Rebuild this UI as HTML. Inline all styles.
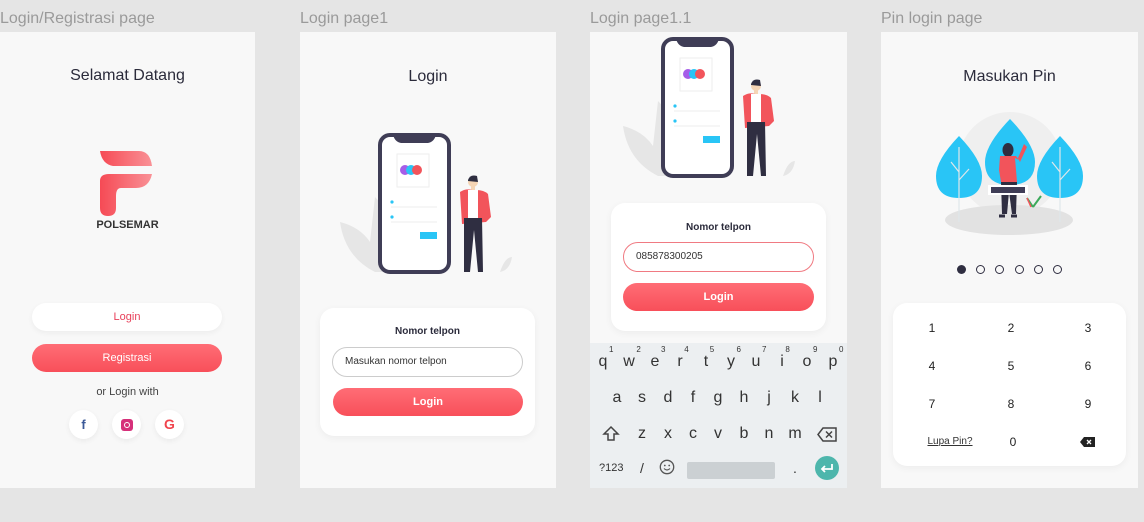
<!DOCTYPE html>
<html><head><meta charset="utf-8"><style>
*{margin:0;padding:0;box-sizing:border-box}
body{width:1144px;height:522px;background:#e5e5e5;position:relative;overflow:hidden;font-family:"Liberation Sans",sans-serif}
.lbl{position:absolute;top:10px;font-size:16px;color:#9a9a9a}
.fr{position:absolute;top:32px;height:456px;background:#f8f8f8;overflow:hidden}
.a{position:absolute}
.t{position:absolute;width:100%;text-align:center;color:#2b2b3b}
.btn{position:absolute;border-radius:15px;text-align:center;font-size:11px;font-weight:bold;color:#fff;background:linear-gradient(#ff6d76,#f84f5a)}
.card{position:absolute;background:#fff;border-radius:14px;box-shadow:0 2px 8px rgba(0,0,0,.05)}
.k{position:absolute;font-size:16px;color:#333;transform:translateX(-50%)}
.k sup{position:absolute;font-size:8px;top:-8px;right:-6px}
.n{position:absolute;font-size:12px;color:#222;transform:translateX(-50%)}
.soc{position:absolute;width:29px;height:29px;border-radius:50%;background:#fff;box-shadow:0 2px 6px rgba(0,0,0,.06);text-align:center;line-height:29px;font-weight:bold;font-size:14px}
</style></head><body>
<div class="lbl" style="left:0">Login/Registrasi page</div>
<div class="lbl" style="left:300px">Login page1</div>
<div class="lbl" style="left:590px">Login page1.1</div>
<div class="lbl" style="left:881px">Pin login page</div>

<!-- frame 1 -->
<div class="fr" style="left:0;width:255px">
 <div class="t" style="top:35px;font-size:16px">Selamat Datang</div>
 <svg class="a" style="left:99px;top:119px" width="54" height="65" viewBox="0 0 54 65">
  <defs><linearGradient id="g1" x1="0" x2="1"><stop offset="0" stop-color="#f64a55"/><stop offset="1" stop-color="#f99196"/></linearGradient></defs>
  <path d="M1 0H40Q51 0 53 15H14Q3 13 1 0Z" fill="url(#g1)"/>
  <path d="M1 30Q1 23 10 23H53Q50 37 37 37H22Q17 37 17 45V57Q17 65 9 65Q1 65 1 57Z" fill="url(#g1)"/>
 </svg>
 <div class="t" style="top:187px;font-size:11px;font-weight:bold;color:#333">POLSEMAR</div>
 <div class="btn" style="left:32px;top:271px;width:190px;height:28px;line-height:28px;background:#fff;color:#e8405a;font-weight:normal;box-shadow:0 2px 6px rgba(0,0,0,.05)">Login</div>
 <div class="btn" style="left:32px;top:312px;width:190px;height:28px;line-height:28px;font-weight:normal">Registrasi</div>
 <div class="t" style="top:354px;font-size:11px;color:#444">or Login with</div>
 <div class="soc" style="left:69px;top:378px;color:#3b5998;font-size:13px">f</div>
 <div class="soc" style="left:112px;top:378px"><span style="display:inline-block;width:12px;height:12px;border-radius:3px;background:#d6307a;vertical-align:middle;position:relative"><span style="position:absolute;left:3px;top:3px;width:6px;height:6px;border-radius:50%;border:1.5px solid #fff;box-sizing:border-box"></span></span></div>
 <div class="soc" style="left:155px;top:378px;color:#f0444d">G</div>
</div>

<!-- frame 2 -->
<div class="fr" style="left:300px;width:256px">
 <div class="t" style="top:36px;font-size:16px">Login</div>
 <svg class="a" style="left:0;top:0" width="256" height="260">
   <path d="M40 190Q60 195 70 210L75 165Q95 185 95 220L110 240L75 240Q45 225 40 190Z" fill="#e6e6e6"/>
   <path d="M200 240Q205 225 212 225Q210 238 200 240Z" fill="#e6e6e6"/>
   <rect x="80" y="103" width="69" height="137" rx="10" fill="#fff" stroke="#3f3d56" stroke-width="4"/>
   <path d="M93 103H136Q134 110 128 111H101Q95 110 93 103Z" fill="#3f3d56"/>
   <rect x="97" y="122" width="32" height="33" fill="#fff" stroke="#eee"/>
   <circle cx="105" cy="138" r="5" fill="#a55de8"/><circle cx="111" cy="138" r="5" fill="#29c5f6"/><circle cx="117" cy="138" r="5" fill="#f2545b"/>
   <circle cx="92" cy="170" r="1.6" fill="#29c5f6"/><circle cx="92" cy="185" r="1.6" fill="#29c5f6"/>
   <line x1="91" y1="175" x2="137" y2="175" stroke="#eee"/><line x1="91" y1="190" x2="137" y2="190" stroke="#eee"/>
   <rect x="120" y="200" width="17" height="7" fill="#29c5f6"/>
   <circle cx="173" cy="150" r="5" fill="#f5d5b5"/><path d="M168 148Q170 142 177 144L178 150L168 149Z" fill="#2f2e41"/>
   <rect x="171" y="154" width="4" height="5" fill="#f5d5b5"/>
   <path d="M160 160Q166 156 172 158H176Q184 158 188 162L191 185L186 190L162 192Z" fill="#f2545b"/>
   <rect x="168" y="158" width="10" height="28" fill="#fff"/>
   <path d="M164 186H182L183 240H178L174 198L170 240H164Z" fill="#2f2e41"/>
 </svg>
 <div class="card" style="left:20px;top:276px;width:215px;height:128px">
  <div class="t" style="top:18px;font-size:10px;font-weight:bold">Nomor telpon</div>
  <div class="a" style="left:12px;top:39px;width:191px;height:30px;border:1px solid #ccc;border-radius:15px;font-size:10px;line-height:28px;padding-left:12px;color:#333">Masukan nomor telpon</div>
  <div class="btn" style="left:13px;top:80px;width:190px;height:28px;line-height:28px">Login</div>
 </div>
</div>

<!-- frame 3 -->
<div class="fr" style="left:590px;width:257px">
 <svg class="a" style="left:0;top:0" width="257" height="170">
  <g transform="translate(-7,-96)">
   <path d="M40 190Q60 195 70 210L75 165Q95 185 95 220L110 240L75 240Q45 225 40 190Z" fill="#e6e6e6"/>
   <path d="M200 240Q205 225 212 225Q210 238 200 240Z" fill="#e6e6e6"/>
   <rect x="80" y="103" width="69" height="137" rx="10" fill="#fff" stroke="#3f3d56" stroke-width="4"/>
   <path d="M93 103H136Q134 110 128 111H101Q95 110 93 103Z" fill="#3f3d56"/>
   <rect x="97" y="122" width="32" height="33" fill="#fff" stroke="#eee"/>
   <circle cx="105" cy="138" r="5" fill="#a55de8"/><circle cx="111" cy="138" r="5" fill="#29c5f6"/><circle cx="117" cy="138" r="5" fill="#f2545b"/>
   <circle cx="92" cy="170" r="1.6" fill="#29c5f6"/><circle cx="92" cy="185" r="1.6" fill="#29c5f6"/>
   <line x1="91" y1="175" x2="137" y2="175" stroke="#eee"/><line x1="91" y1="190" x2="137" y2="190" stroke="#eee"/>
   <rect x="120" y="200" width="17" height="7" fill="#29c5f6"/>
   <circle cx="173" cy="150" r="5" fill="#f5d5b5"/><path d="M168 148Q170 142 177 144L178 150L168 149Z" fill="#2f2e41"/>
   <rect x="171" y="154" width="4" height="5" fill="#f5d5b5"/>
   <path d="M160 160Q166 156 172 158H176Q184 158 188 162L191 185L186 190L162 192Z" fill="#f2545b"/>
   <rect x="168" y="158" width="10" height="28" fill="#fff"/>
   <path d="M164 186H182L183 240H178L174 198L170 240H164Z" fill="#2f2e41"/>
  </g>
 </svg>
 <div class="card" style="left:21px;top:171px;width:215px;height:128px">
  <div class="t" style="top:19px;font-size:10px;font-weight:bold">Nomor telpon</div>
  <div class="a" style="left:12px;top:39px;width:191px;height:30px;border:1px solid #f07a82;border-radius:15px;font-size:10px;line-height:28px;padding-left:12px;color:#333">085878300205</div>
  <div class="btn" style="left:12px;top:80px;width:191px;height:28px;line-height:28px">Login</div>
 </div>
 <div class="a" style="left:0;top:311px;width:257px;height:145px;background:#eceff1">
  <div class="k" style="left:13px;top:10px">q<sup>1</sup></div><div class="k" style="left:39px;top:10px">w<sup>2</sup></div><div class="k" style="left:65px;top:10px">e<sup>3</sup></div><div class="k" style="left:90px;top:10px">r<sup>4</sup></div><div class="k" style="left:116px;top:10px">t<sup>5</sup></div><div class="k" style="left:141px;top:10px">y<sup>6</sup></div><div class="k" style="left:166px;top:10px">u<sup>7</sup></div><div class="k" style="left:192px;top:10px">i<sup>8</sup></div><div class="k" style="left:217px;top:10px">o<sup>9</sup></div><div class="k" style="left:243px;top:10px">p<sup>0</sup></div>
  <div class="k" style="left:27px;top:46px">a</div><div class="k" style="left:52px;top:46px">s</div><div class="k" style="left:78px;top:46px">d</div><div class="k" style="left:103px;top:46px">f</div><div class="k" style="left:128px;top:46px">g</div><div class="k" style="left:154px;top:46px">h</div><div class="k" style="left:179px;top:46px">j</div><div class="k" style="left:205px;top:46px">k</div><div class="k" style="left:230px;top:46px">l</div>
  <svg class="a" style="left:12px;top:82px" width="18" height="18" viewBox="0 0 18 18"><path d="M9 2L16 9H12V15H6V9H2Z" fill="none" stroke="#444" stroke-width="1.5"/></svg>
  <div class="k" style="left:52px;top:82px">z</div><div class="k" style="left:78px;top:82px">x</div><div class="k" style="left:103px;top:82px">c</div><div class="k" style="left:128px;top:82px">v</div><div class="k" style="left:154px;top:82px">b</div><div class="k" style="left:179px;top:82px">n</div><div class="k" style="left:205px;top:82px">m</div>
  <svg class="a" style="left:227px;top:84px" width="20" height="15" viewBox="0 0 20 15"><path d="M6 1H19V14H6L1 7.5Z" fill="none" stroke="#444" stroke-width="1.5"/><path d="M9 4.5L15 10.5M15 4.5L9 10.5" stroke="#444" stroke-width="1.5"/></svg>
  <div class="a" style="left:9px;top:119px;font-size:11px;color:#333">?123</div>
  <div class="a" style="left:50px;top:117px;font-size:14px;color:#333">/</div>
  <svg class="a" style="left:69px;top:116px" width="16" height="16" viewBox="0 0 16 16"><circle cx="8" cy="8" r="6.7" fill="none" stroke="#555" stroke-width="1.3"/><circle cx="5.8" cy="6.5" r="0.9" fill="#555"/><circle cx="10.2" cy="6.5" r="0.9" fill="#555"/><path d="M5 9.5Q8 12.5 11 9.5" fill="none" stroke="#555" stroke-width="1.2"/></svg>
  <div class="a" style="left:97px;top:119px;width:88px;height:17px;background:#cbd0d3;border-radius:2px"></div>
  <div class="a" style="left:203px;top:117px;font-size:14px;color:#333">.</div>
  <div class="a" style="left:225px;top:113px;width:24px;height:24px;border-radius:50%;background:#4db6ac"><svg width="24" height="24"><path d="M17 8V13H7M10 10L7 13L10 16" fill="none" stroke="#fff" stroke-width="1.8"/></svg></div>
 </div>
</div>

<!-- frame 4 -->
<div class="fr" style="left:881px;width:257px">
 <div class="t" style="top:36px;font-size:16px">Masukan Pin</div>
 <svg class="a" style="left:0;top:0" width="257" height="220">
  <circle cx="129" cy="132" r="52" fill="#efefef"/>
  <ellipse cx="128" cy="188" rx="64" ry="15" fill="#e2e2e2"/>
  <path d="M78 104Q101 128 101 144Q101 166 78 166Q55 166 55 144Q55 128 78 104Z" fill="#29c5f6"/>
  <path d="M129 87Q154 113 154 130Q154 153 129 153Q104 153 104 130Q104 113 129 87Z" fill="#29c5f6"/>
  <path d="M179 104Q202 128 202 144Q202 166 179 166Q156 166 156 144Q156 128 179 104Z" fill="#29c5f6"/>
  <path d="M78 115V190M179 115V190M78 140L70 130M78 148L88 137M179 140L171 130M179 148L189 137" stroke="#dfe7ea" stroke-width="1.2"/>
  <ellipse cx="127" cy="118" rx="5.5" ry="7" fill="#2f2e41"/>
  <path d="M119 124H135L138 128L134 126L136 150H120L118 138Z" fill="#f2545b"/>
  <path d="M137 126L143 112L146 115L139 130Z" fill="#f2545b"/>
  <path d="M120 150H136L135 182H131L128 160L126 182H121Z" fill="#2f2e41"/>
  <rect x="107" y="153" width="40" height="10" fill="#fff"/><rect x="110" y="155" width="34" height="6" fill="#3f3d56"/>
  <path d="M118 184H124M130 184H136" stroke="#2f2e41" stroke-width="3"/>
  <path d="M152 175L160 164M152 175L146 166" stroke="#3ca95b" stroke-width="2"/>
  <path d="M146 166L150 175" stroke="#f2545b" stroke-width="1.5"/>
 </svg>
 <div class="a" style="left:76px;top:233px;width:9px;height:9px;border-radius:50%;background:#2f2e41"></div>
 <div class="a" style="left:95px;top:233px;width:9px;height:9px;border-radius:50%;border:1.3px solid #2f2e41"></div>
 <div class="a" style="left:114px;top:233px;width:9px;height:9px;border-radius:50%;border:1.3px solid #2f2e41"></div>
 <div class="a" style="left:134px;top:233px;width:9px;height:9px;border-radius:50%;border:1.3px solid #2f2e41"></div>
 <div class="a" style="left:153px;top:233px;width:9px;height:9px;border-radius:50%;border:1.3px solid #2f2e41"></div>
 <div class="a" style="left:172px;top:233px;width:9px;height:9px;border-radius:50%;border:1.3px solid #2f2e41"></div>
 <div class="card" style="left:12px;top:271px;width:233px;height:163px">
  <div class="n" style="left:39px;top:18px">1</div><div class="n" style="left:118px;top:18px">2</div><div class="n" style="left:195px;top:18px">3</div>
  <div class="n" style="left:39px;top:56px">4</div><div class="n" style="left:118px;top:56px">5</div><div class="n" style="left:195px;top:56px">6</div>
  <div class="n" style="left:39px;top:94px">7</div><div class="n" style="left:118px;top:94px">8</div><div class="n" style="left:195px;top:94px">9</div>
  <div class="n" style="left:57px;top:133px;font-size:10px;text-decoration:underline;color:#333">Lupa Pin?</div>
  <div class="n" style="left:120px;top:132px">0</div>
  <svg class="a" style="left:187px;top:134px" width="15" height="10" viewBox="0 0 15 10"><path d="M4 0H15V10H4L0 5Z" fill="#222"/><path d="M7 3L11 7M11 3L7 7" stroke="#fff" stroke-width="1.3"/></svg>
 </div>
</div>
</body></html>
